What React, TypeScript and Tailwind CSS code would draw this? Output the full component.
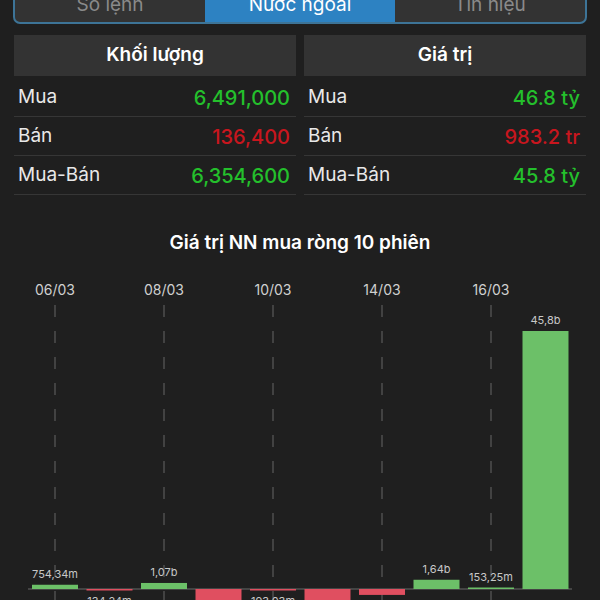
import React from 'react';

const font = { fontFamily: 'Inter, "Noto Sans", sans-serif' };

type Row = { label: string; value: string; tone: 'up' | 'down' };

const volumeRows: Row[] = [
  { label: 'Mua', value: '6,491,000', tone: 'up' },
  { label: 'Bán', value: '136,400', tone: 'down' },
  { label: 'Mua-Bán', value: '6,354,600', tone: 'up' },
];

const valueRows: Row[] = [
  { label: 'Mua', value: '46.8 tỷ', tone: 'up' },
  { label: 'Bán', value: '983.2 tr', tone: 'down' },
  { label: 'Mua-Bán', value: '45.8 tỷ', tone: 'up' },
];

// net foreign buy value, in billions
const sessions = [
  { date: '06/03', value: 0.754, label: '754,34m' },
  { date: '07/03', value: -0.134, label: '134,24m' },
  { date: '08/03', value: 1.07, label: '1,07b' },
  { date: '09/03', value: -2.6, label: '2,61b' },
  { date: '10/03', value: -0.193, label: '193,03m' },
  { date: '13/03', value: -2.4, label: '2,43b' },
  { date: '14/03', value: -1.05, label: '1,05b' },
  { date: '15/03', value: 1.64, label: '1,64b' },
  { date: '16/03', value: 0.153, label: '153,25m' },
  { date: '17/03', value: 45.8, label: '45,8b' },
];

const StatColumn = ({ title, rows }: { title: string; rows: Row[] }) => (
  <div className="flex-1 flex flex-col">
    <div className="h-[41px] mb-[2px] bg-[#333333] flex items-center justify-center text-white text-[19px] font-semibold">
      {title}
    </div>
    {rows.map((r) => (
      <div
        key={r.label}
        className="h-[39px] pt-[1px] flex items-center justify-between pl-[4px] pr-[6px] border-b border-[#363636]"
      >
        <span className="text-[#e8e8e8] text-[19px]">{r.label}</span>
        <span
          className={`text-[20px] font-medium ${r.tone === 'up' ? 'text-[#24c02c]' : 'text-[#c8161e]'}`}
        >
          {r.value}
        </span>
      </div>
    ))}
  </div>
);

const Chart = () => {
  const base = 319;
  const scale = 258 / 45.8;
  const step = 54.5;
  const barW = 46;
  return (
    <svg width="600" height="330" className="block" style={font}>
      {sessions.map((s, i) => {
        const cx = 55 + i * step;
        const showDate = i % 2 === 0;
        return showDate ? (
          <g key={'d' + i}>
            <text x={cx} y={25} textAnchor="middle" fill="#d0d0d0" fontSize="14">
              {s.date}
            </text>
            <line x1={cx} y1={35} x2={cx} y2={330} stroke="#5a5a5a" strokeWidth="1.2" strokeDasharray="12 14" />
          </g>
        ) : null;
      })}
      <line x1={28} y1={base} x2={572} y2={base} stroke="#6a6a6a" strokeWidth="1" />
      {sessions.map((s, i) => {
        const cx = 55 + i * step;
        const h = Math.max(1.5, Math.abs(s.value) * scale);
        const up = s.value >= 0;
        const y = up ? base - h : base;
        return (
          <g key={'b' + i}>
            <rect x={cx - barW / 2} y={y} width={barW} height={h} fill={up ? '#6cc068' : '#e04f60'} />
            <text
              x={cx}
              y={up ? y - 7 : y + h + 14}
              textAnchor="middle"
              fill="#c8c8c8"
              fontSize="11"
            >
              {s.label}
            </text>
          </g>
        );
      })}
    </svg>
  );
};

export default function App() {
  return (
    <div className="w-[600px] h-[600px] overflow-hidden bg-[#1f1f1f]" style={font}>
      <div className="mx-[13px] -mt-[14px] h-[38px] rounded-[7px] border-2 border-[#3d7497] bg-[#333333] flex overflow-hidden text-[19px]">
        <div className="flex-1 flex items-center justify-center text-[#8a8a8a]">Sổ lệnh</div>
        <div className="flex-1 flex items-center justify-center bg-[#2d82c2] text-white">Nước ngoài</div>
        <div className="flex-1 flex items-center justify-center text-[#8a8a8a]">Tín hiệu</div>
      </div>
      <div className="mt-[11px] mx-[14px] flex gap-[8px]">
        <StatColumn title="Khối lượng" rows={volumeRows} />
        <StatColumn title="Giá trị" rows={valueRows} />
      </div>
      <div className="mt-[36px] text-center text-white text-[19px] font-semibold leading-[24px]">
        Giá trị NN mua ròng 10 phiên
      </div>
      <div className="mt-[15px]">
        <Chart />
      </div>
    </div>
  );
}
